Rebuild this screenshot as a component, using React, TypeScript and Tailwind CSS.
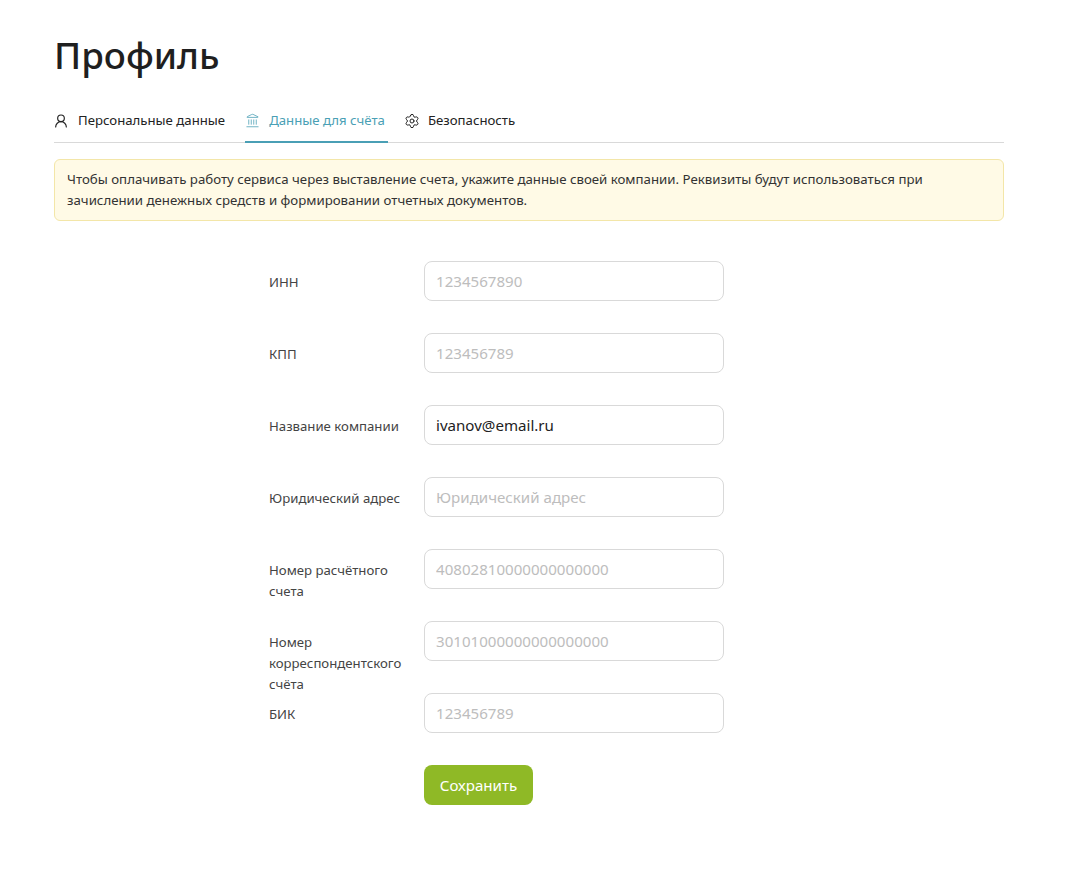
import React from 'react';
import { UserRound, Landmark, Settings } from 'lucide-react';

const fields = [
  { label: 'ИНН', placeholder: '1234567890' },
  { label: 'КПП', placeholder: '123456789' },
  { label: 'Название компании', value: 'ivanov@email.ru' },
  { label: 'Юридический адрес', placeholder: 'Юридический адрес' },
  { label: 'Номер расчётного счета', placeholder: '40802810000000000000' },
  { label: 'Номер корреспондентского счёта', placeholder: '30101000000000000000' },
  { label: 'БИК', placeholder: '123456789' },
];

const App = () => {
  return (
    <div className="min-h-[873px] bg-white px-[54px] pt-[30px] font-['Noto_Sans',sans-serif] text-[#222]">
      <div className="w-[950px]">
        <h1 className="text-[36.7px] leading-[50px] font-medium text-[#1f1f1f]">Профиль</h1>

        <div className="mt-[21px] flex h-[42px] gap-[16px] border-b border-[#d9d9d9] text-[13.2px]">
          <div className="flex h-[42px] items-center gap-[9px] pr-[4px] pb-[3px]">
            <UserRound size={16} strokeWidth={1.75} className="-ml-[1px]" />
            <span>Персональные данные</span>
          </div>
          <div className="flex h-[42px] items-center gap-[9px] border-b-2 border-[#4a9fb5] pr-[3px] pb-[1px] text-[#4a9fb5]">
            <Landmark size={15} strokeWidth={1.25} />
            <span>Данные для счёта</span>
          </div>
          <div className="flex h-[42px] items-center gap-[8px] pr-[4px] pb-[3px]">
            <Settings size={16} strokeWidth={1.5} />
            <span>Безопасность</span>
          </div>
        </div>

        <div className="mt-[16px] rounded-[6px] border border-[#f3e6a8] bg-[#fffae6] py-[9px] pr-[60px] pl-[12px] text-[13.25px] leading-[21px] text-[#333]">
          Чтобы оплачивать работу сервиса через выставление счета, укажите данные своей компании. Реквизиты будут использоваться при зачислении денежных средств и формировании отчетных документов.
        </div>

        <form className="mt-[40px] ml-[215px] w-[455px]">
          {fields.map(field => (
            <div key={field.label} className="mb-[32px] flex h-10 items-start">
              <label className="w-[155px] pt-[11px] pr-[15px] text-[13.2px] leading-[21px] text-[#444]">{field.label}</label>
              <input
                className="h-10 w-[300px] rounded-[8px] border border-[#d9d9d9] px-[11px] text-[15.1px] text-[#222] outline-none placeholder:text-[#bdbdbd]"
                placeholder={field.placeholder}
                defaultValue={field.value}
              />
            </div>
          ))}
          <button type="button" className="ml-[155px] h-10 w-[109px] rounded-[8px] bg-[#8fb926] text-[15.1px] text-white">
            Сохранить
          </button>
        </form>
      </div>
    </div>
  );
};

export default App;
